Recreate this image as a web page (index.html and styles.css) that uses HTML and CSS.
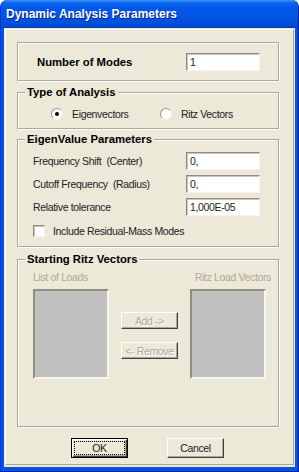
FILE: index.html
```html
<!DOCTYPE html>
<html>
<head>
<meta charset="utf-8">
<link rel="stylesheet" href="styles.css">
</head>
<body>
<div class="win">
  <div class="titlebar"><span class="title-text">Dynamic Analysis Parameters</span></div>
  <div class="client">
    <div class="frame">
      <div class="group modes">
        <span class="bold-label">Number of Modes</span>
        <div class="field">1</div>
      </div>

      <div class="group type">
        <span class="legend">Type of Analysis</span>
        <div class="radios">
          <span class="radio-item first"><span class="radio checked"></span><span>Eigenvectors</span></span>
          <span class="radio-item"><span class="radio"></span><span>Ritz Vectors</span></span>
        </div>
      </div>

      <div class="group eigen">
        <span class="legend">EigenValue Parameters</span>
        <div class="row first-row"><span class="row-label">Frequency Shift&nbsp; (Center)</span><div class="field">0,</div></div>
        <div class="row"><span class="row-label">Cutoff Frequency&nbsp; (Radius)</span><div class="field">0,</div></div>
        <div class="row"><span class="row-label">Relative tolerance</span><div class="field">1,000E-05</div></div>
        <div class="check-row"><span class="checkbox"></span><span>Include Residual-Mass Modes</span></div>
      </div>

      <div class="group ritz">
        <span class="legend">Starting Ritz Vectors</span>
        <div class="lists">
          <div class="list-col">
            <span class="disabled-text">List of Loads</span>
            <div class="listbox"></div>
          </div>
          <div class="mid-col">
            <div class="btn small disabled">Add -&gt;</div>
            <div class="btn small disabled">&lt;- Remove</div>
          </div>
          <div class="list-col right">
            <span class="disabled-text">Ritz Load Vectors</span>
            <div class="listbox"></div>
          </div>
        </div>
      </div>

      <div class="buttons">
        <div class="btn big default"><span class="focus">OK</span></div>
        <div class="btn big">Cancel</div>
      </div>
    </div>
  </div>
</div>
</body>
</html>
```

FILE: styles.css
```css
html, body {
  margin: 0;
  padding: 0;
  background: #ffffff;
}

.win {
  width: 299px;
  height: 472px;
  display: flex;
  flex-direction: column;
  background: #0055e5;
  border-radius: 7px 7px 0 0;
  overflow: hidden;
  box-sizing: border-box;
  border-left: 1px solid #0831d9;
  border-right: 1px solid #001ea0;
  border-bottom: 1px solid #001ea0;
  font-family: "Liberation Sans", Arial, sans-serif;
  font-size: 10.5px;
  letter-spacing: -0.35px;
  color: #000;
}

.titlebar {
  height: 28px;
  flex: none;
  background: linear-gradient(180deg, #3d95ff 0, #0a62ef 3px, #0058e8 8px, #0054e3 18px, #004fd9 24px, #0046c6 27px, #003aa8 28px);
  display: flex;
  align-items: center;
  padding-left: 5px;
  padding-bottom: 1px;
  box-sizing: border-box;
}

.title-text {
  color: #ffffff;
  font-weight: bold;
  font-size: 12px;
  letter-spacing: 0;
  text-shadow: 1px 1px 0 #0a1e8c;
}

.client {
  flex: 1;
  margin: 0 3px 4px 3px;
  background: #ece9d8;
  display: flex;
  flex-direction: column;
  padding: 1px 1px 2px 1px;
}

.frame {
  flex: 1;
  border-top: 1px solid #ffffff;
  border-left: 1px solid #ffffff;
  border-right: 1px solid #aca899;
  border-bottom: 1px solid #aca899;
  padding: 12px 0 0 11px;
  display: flex;
  flex-direction: column;
}

.group {
  width: 262px;
  box-sizing: border-box;
  border: 1px solid #aca899;
  box-shadow: 1px 1px 0 #ffffff, inset 1px 1px 0 #ffffff;
  position: relative;
}

.legend {
  position: absolute;
  left: 7px;
  top: -8px;
  padding: 0 2px;
  background: #ece9d8;
  font-weight: bold;
  font-size: 11.3px;
  letter-spacing: 0;
  line-height: 14px;
}

.modes {
  height: 39px;
  display: flex;
  align-items: center;
  padding-left: 19px;
}

.bold-label {
  font-weight: bold;
  font-size: 11.3px;
  letter-spacing: 0;
  flex: 1;
}

.field {
  width: 74px;
  height: 18px;
  box-sizing: border-box;
  background: #ffffff;
  border-top: 1px solid #8e8c82;
  border-left: 1px solid #8e8c82;
  border-right: 1px solid #f4f3ee;
  border-bottom: 1px solid #f4f3ee;
  box-shadow: inset 1px 1px 0 #c9c6b8;
  padding: 2px 0 0 3px;
  line-height: 13px;
  color: #222;
}

.modes .field {
  margin-right: 18px;
}

.type {
  margin-top: 11px;
  height: 37px;
}

.radios {
  display: flex;
  padding-top: 15px;
}

.radio-item {
  display: flex;
  align-items: center;
  gap: 9px;
  color: #222;
}

.radio-item.first {
  margin-left: 33px;
  width: 109px;
}

.radio {
  width: 12px;
  height: 12px;
  box-sizing: border-box;
  border-radius: 50%;
  background: #ffffff;
  border: 1px solid;
  border-color: #9a988c #f2f1ea #f2f1ea #9a988c;
  position: relative;
}

.radio.checked::after {
  content: "";
  position: absolute;
  left: 3px;
  top: 3px;
  width: 4px;
  height: 4px;
  border-radius: 50%;
  background: #000;
}

.eigen {
  margin-top: 10px;
  height: 108px;
  padding: 12px 0 0 15px;
}

.row {
  display: flex;
  align-items: center;
  height: 18px;
  margin-bottom: 5px;
  color: #222;
}

.row-label {
  width: 153px;
}

.check-row {
  display: flex;
  align-items: center;
  gap: 8px;
  margin-top: 9px;
  color: #222;
}

.checkbox {
  width: 12px;
  height: 12px;
  box-sizing: border-box;
  background: #ffffff;
  border-top: 1px solid #8e8c82;
  border-left: 1px solid #8e8c82;
  border-right: 1px solid #f4f3ee;
  border-bottom: 1px solid #f4f3ee;
  box-shadow: inset 1px 1px 0 #c9c6b8;
}

.ritz {
  margin-top: 12px;
  height: 168px;
  padding: 10px 0 0 15px;
}

.lists {
  display: flex;
}

.list-col {
  display: flex;
  flex-direction: column;
  width: 76px;
}

.list-col.right {
  width: 81px;
  margin-left: 12px;
}

.list-col.right .disabled-text {
  text-align: right;
}

.disabled-text {
  color: #aca899;
  height: 14px;
  line-height: 14px;
  margin-bottom: 5px;
  white-space: nowrap;
}

.listbox {
  width: 76px;
  height: 90px;
  box-sizing: border-box;
  background: #c0c0c0;
  border-top: 2px solid #8f8d80;
  border-left: 2px solid #8f8d80;
  border-right: 2px solid #f7f6f1;
  border-bottom: 2px solid #f7f6f1;
}

.mid-col {
  display: flex;
  flex-direction: column;
  margin-left: 12px;
  padding-top: 42px;
  gap: 13px;
}

.btn {
  box-sizing: border-box;
  display: flex;
  align-items: center;
  justify-content: center;
  background: #ece9d8;
  border-top: 1px solid #ffffff;
  border-left: 1px solid #ffffff;
  border-right: 1px solid #404040;
  border-bottom: 1px solid #404040;
  box-shadow: inset -1px -1px 0 #aca899;
  color: #222;
  white-space: nowrap;
}

.btn.small {
  width: 57px;
  height: 17px;
}

.btn.disabled {
  color: #aca899;
  text-shadow: 1px 1px 0 #ffffff;
}

.buttons {
  display: flex;
  gap: 39px;
  margin-top: 11px;
  padding-left: 54px;
}

.btn.big {
  width: 57px;
  height: 20px;
}

.btn.default {
  border: 1px solid #000;
  box-shadow: inset 1px 1px 0 #ffffff, inset -1px -1px 0 #404040, inset -2px -2px 0 #aca899;
}

.focus {
  border: 1px dotted #000;
  width: 49px;
  height: 12px;
  display: flex;
  align-items: center;
  justify-content: center;
  line-height: 12px;
}
```
